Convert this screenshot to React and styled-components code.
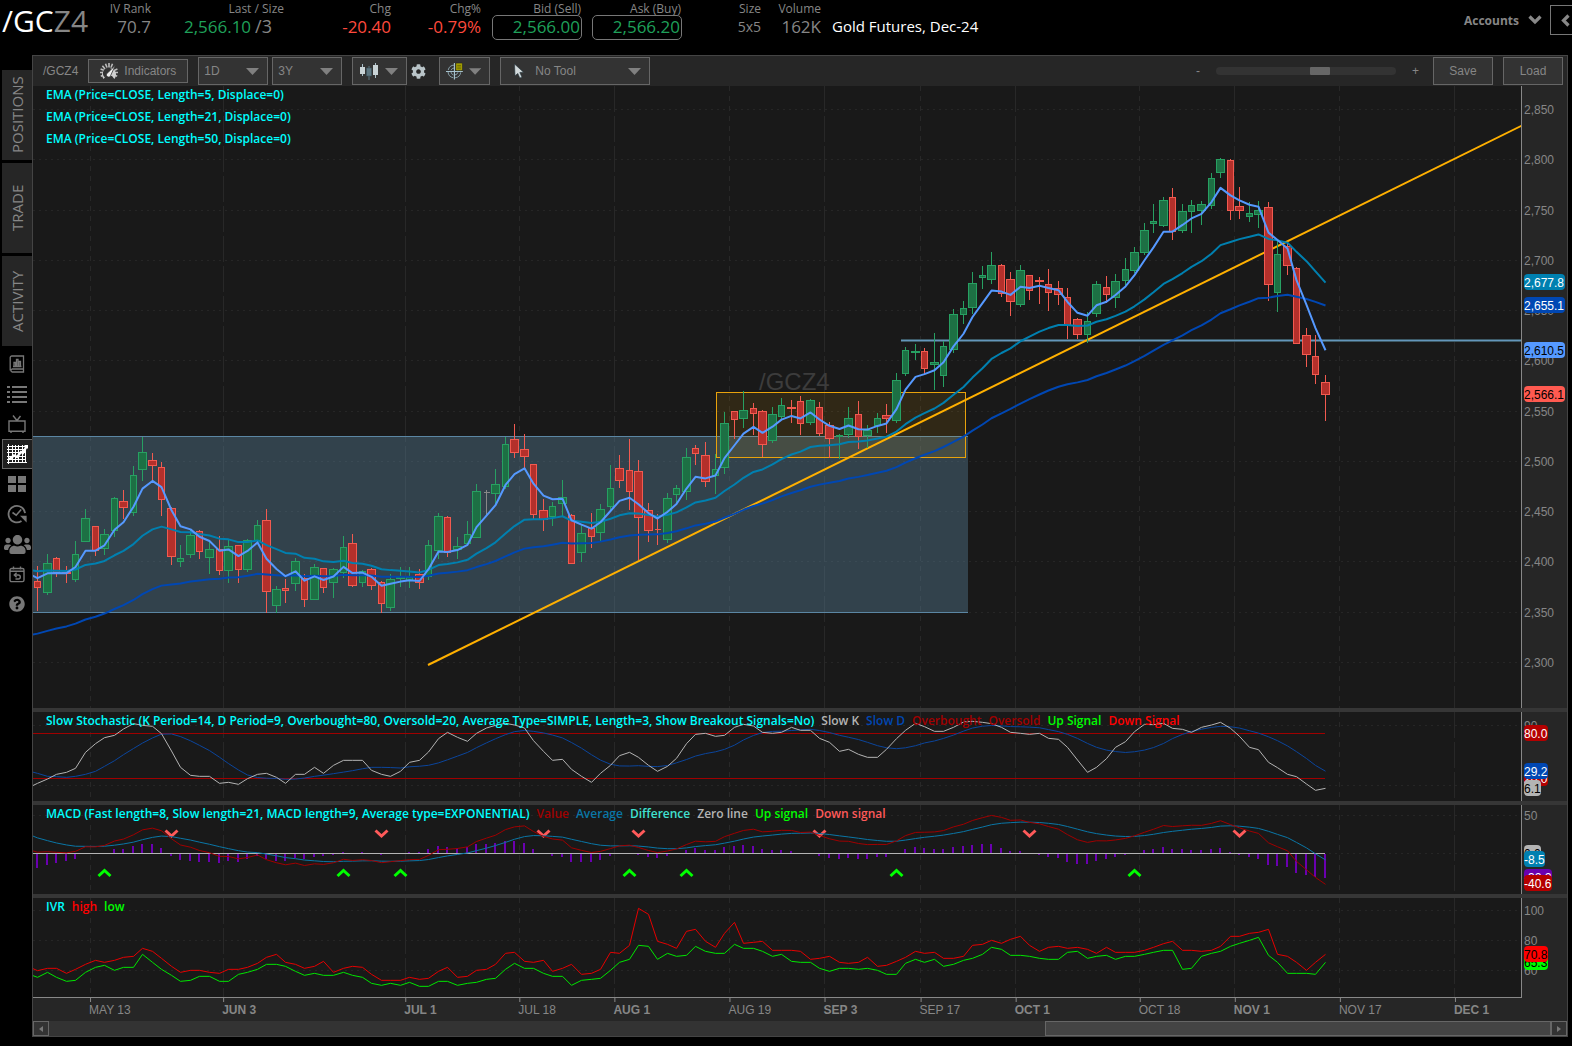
import React from 'react'
import styled, { ThemeProvider, createGlobalStyle } from 'styled-components'
import { FaCog, FaUsers, FaQuestionCircle } from 'react-icons/fa'

const theme = {
  bg: '#000',
  panel: '#262626',
  plot: '#191919',
  control: '#333',
  border: '#666',
  edge: '#444',
  text: '#868686',
  up: '#1fa05a',
  down: '#ff4a3d',
  cyan: '#0ff',
  sans: "'Open Sans', 'Noto Sans', sans-serif",
  ui: "'Liberation Sans', Arial, sans-serif",
}

const GlobalStyle = createGlobalStyle`
  *, *::before, *::after { box-sizing: border-box; }
  html { background: #000; }
  body { margin: 0; }
  button, select, input { font: inherit; color: inherit; margin: 0; }
`

/* ---------- data ---------- */

// colour, high, body top, body bottom, low
const CANDLES = [
  ['r', 566, 581, 587, 610], ['g', 554, 563, 592, 594], ['r', 557, 558, 572, 576], ['r', 566, 572, 573, 582],
  ['g', 541, 554, 579, 581], ['g', 509, 518, 541, 541], ['r', 526, 526, 550, 555], ['g', 529, 534, 548, 554],
  ['g', 497, 498, 530, 536], ['r', 490, 501, 507, 518], ['g', 466, 475, 512, 515], ['g', 437, 452, 469, 480],
  ['r', 453, 460, 465, 482], ['r', 462, 467, 499, 515], ['r', 507, 508, 556, 564], ['g', 545, 558, 561, 566],
  ['g', 530, 535, 554, 557], ['r', 530, 531, 551, 558], ['g', 542, 549, 557, 573], ['r', 536, 549, 570, 574],
  ['g', 540, 546, 570, 582], ['r', 545, 545, 569, 582], ['g', 539, 540, 569, 571], ['g', 520, 525, 540, 541],
  ['r', 509, 520, 591, 612], ['g', 586, 589, 605, 612], ['r', 579, 588, 590, 602], ['g', 558, 561, 583, 590],
  ['r', 574, 578, 599, 606], ['g', 564, 567, 599, 599], ['r', 568, 568, 587, 592], ['g', 568, 569, 582, 597],
  ['g', 536, 547, 572, 577], ['r', 534, 543, 585, 586], ['g', 570, 571, 582, 586], ['r', 568, 569, 585, 589],
  ['r', 581, 582, 603, 612], ['g', 574, 579, 607, 610], ['g', 567, 577, 578, 586], ['g', 567, 577, 580, 587],
  ['r', 569, 574, 582, 588], ['g', 540, 545, 576, 579], ['g', 513, 516, 550, 558], ['r', 516, 517, 552, 556],
  ['g', 537, 546, 549, 558], ['g', 521, 534, 543, 544], ['g', 484, 491, 537, 537], ['n', 490, 492, 492, 515],
  ['g', 469, 484, 493, 504], ['g', 437, 444, 486, 488], ['r', 424, 439, 452, 457], ['r', 434, 449, 456, 468],
  ['r', 464, 464, 514, 518], ['r', 499, 510, 519, 530], ['g', 502, 506, 516, 525], ['g', 480, 497, 503, 516],
  ['r', 514, 515, 563, 563], ['g', 524, 533, 552, 561], ['r', 513, 528, 536, 547], ['g', 504, 509, 532, 541],
  ['g', 465, 488, 506, 510], ['r', 455, 468, 480, 487], ['r', 439, 470, 491, 509], ['r', 460, 471, 517, 559],
  ['r', 503, 510, 530, 541], ['r', 514, 529, 529, 544], ['g', 493, 498, 539, 542], ['g', 485, 488, 494, 504],
  ['g', 448, 457, 491, 499], ['r', 445, 448, 453, 464], ['r', 442, 455, 481, 486], ['g', 454, 469, 475, 493],
  ['g', 412, 423, 467, 473], ['r', 411, 411, 419, 438], ['g', 391, 410, 418, 427], ['r', 403, 408, 413, 434],
  ['r', 410, 411, 444, 456], ['g', 407, 414, 440, 442], ['g', 398, 405, 416, 418], ['r', 400, 407, 408, 422],
  ['r', 396, 401, 423, 434], ['g', 399, 400, 422, 424], ['r', 402, 407, 433, 435], ['r', 422, 425, 438, 457],
  ['g', 434, 435, 436, 458], ['g', 407, 418, 434, 437], ['r', 401, 414, 436, 448], ['g', 425, 430, 435, 447],
  ['g', 413, 418, 425, 432], ['r', 404, 415, 418, 432], ['g', 373, 380, 420, 422], ['g', 347, 350, 373, 375],
  ['g', 344, 351, 352, 359], ['r', 348, 351, 368, 374], ['g', 333, 362, 364, 389], ['g', 341, 346, 375, 386],
  ['g', 309, 314, 349, 352], ['g', 301, 308, 314, 323], ['g', 272, 283, 307, 313], ['g', 266, 275, 277, 288],
  ['g', 252, 265, 279, 283], ['r', 264, 265, 293, 296], ['r', 272, 279, 301, 315], ['g', 265, 270, 304, 306],
  ['r', 275, 275, 290, 299], ['r', 277, 280, 281, 303], ['r', 269, 284, 292, 310], ['r', 281, 288, 294, 304],
  ['r', 288, 297, 325, 338], ['r', 318, 319, 334, 338], ['g', 312, 321, 334, 342], ['g', 281, 284, 313, 316],
  ['r', 276, 287, 294, 302], ['g', 274, 281, 297, 307], ['g', 258, 269, 280, 284], ['g', 247, 252, 270, 272],
  ['g', 223, 230, 252, 254], ['g', 204, 221, 223, 232], ['g', 197, 200, 225, 226], ['r', 188, 197, 231, 239],
  ['g', 204, 211, 230, 232], ['g', 200, 205, 211, 232], ['g', 201, 204, 210, 224], ['g', 173, 178, 205, 208],
  ['g', 158, 159, 172, 177], ['r', 159, 160, 210, 219], ['r', 187, 206, 210, 218], ['g', 202, 213, 216, 221],
  ['g', 201, 210, 214, 227], ['r', 202, 207, 284, 300], ['g', 240, 254, 292, 311], ['r', 242, 246, 265, 274],
  ['r', 267, 268, 343, 343], ['r', 328, 335, 354, 366], ['r', 335, 356, 374, 383], ['r', 375, 382, 394, 420],
]

// lower studies, in thirds of a pixel below y = 700
const SLOW_K = [
  250, 237, 223, 217, 205, 157, 131, 113, 106, 87, 71, 76, 79, 101, 153, 202, 226, 229, 229, 250, 247, 253, 236, 223,
  220, 232, 250, 223, 223, 202, 220, 196, 181, 181, 181, 211, 223, 229, 214, 187, 181, 156, 116, 97, 112, 124, 100, 84,
  76, 70, 75, 84, 122, 154, 181, 178, 208, 229, 247, 220, 196, 167, 157, 172, 196, 214, 199, 175, 131, 103, 100, 109,
  106, 82, 73, 78, 97, 100, 97, 82, 91, 91, 115, 127, 154, 148, 163, 172, 172, 148, 116, 91, 70, 80, 94, 94, 82, 66, 64,
  67, 71, 82, 97, 100, 103, 100, 115, 118, 142, 180, 217, 202, 176, 142, 125, 95, 73, 74, 70, 85, 88, 97, 82, 75, 67,
  85, 109, 142, 149, 187, 203, 223, 230, 252, 271, 265,
]
const SLOW_D_HEAD = [220, 229, 230, 232, 229, 223, 214, 199]

const IVR_HIGH = [
  812, 805, 805, 820, 808, 793, 781, 787, 781, 772, 769, 745, 754, 775, 799, 817, 811, 811, 817, 820, 808, 808, 802,
  790, 772, 763, 787, 793, 805, 799, 784, 817, 805, 799, 802, 823, 841, 841, 841, 832, 838, 835, 814, 802, 832, 829,
  811, 808, 793, 760, 757, 784, 787, 781, 814, 805, 793, 823, 820, 808, 757, 760, 736, 625, 643, 724, 733, 745, 694,
  688, 724, 742, 700, 667, 730, 727, 724, 751, 751, 751, 754, 778, 775, 769, 787, 790, 787, 772, 799, 796, 784, 772,
  754, 760, 757, 775, 775, 769, 736, 733, 721, 730, 718, 709, 736, 754, 742, 739, 745, 742, 748, 760, 742, 757, 757,
  757, 751, 742, 731, 724, 751, 751, 754, 751, 739, 709, 709, 700, 697, 688, 763, 769, 787, 811, 787, 763,
]
const IVR_LOW = [
  832, 817, 832, 844, 841, 817, 802, 796, 811, 802, 802, 763, 787, 808, 826, 844, 841, 829, 829, 844, 844, 823, 817,
  808, 793, 793, 799, 814, 826, 820, 826, 826, 817, 826, 832, 850, 856, 850, 856, 847, 859, 859, 844, 844, 856, 850,
  847, 838, 835, 808, 790, 805, 805, 820, 829, 829, 856, 841, 838, 835, 811, 787, 778, 736, 739, 778, 760, 769, 766,
  739, 754, 760, 760, 733, 745, 745, 754, 769, 763, 784, 787, 787, 805, 814, 805, 805, 808, 805, 811, 823, 823, 790,
  778, 787, 778, 799, 793, 781, 775, 763, 742, 748, 766, 766, 769, 775, 778, 778, 757, 754, 775, 769, 766, 778, 769,
  769, 763, 757, 751, 751, 808, 805, 769, 760, 754, 739, 730, 721, 712, 766, 787, 820, 820, 820, 823, 787,
]

const UP_SIGNALS = [7, 32, 38, 62, 68, 90, 115]
const DOWN_SIGNALS = [14, 36, 53, 63, 82, 104, 126]

const DATES = [
  { x: 90, label: 'MAY 13' },
  { x: 223, label: 'JUN 3', month: true },
  { x: 405, label: 'JUL 1', month: true },
  { x: 519, label: 'JUL 18' },
  { x: 614, label: 'AUG 1', month: true },
  { x: 729, label: 'AUG 19' },
  { x: 824, label: 'SEP 3', month: true },
  { x: 920, label: 'SEP 17' },
  { x: 1015, label: 'OCT 1', month: true },
  { x: 1139, label: 'OCT 18' },
  { x: 1234, label: 'NOV 1', month: true },
  { x: 1339, label: 'NOV 17' },
  { x: 1454, label: 'DEC 1', month: true },
]

const LEFT = 33
const WIDTH = 1488

/* ---------- helpers ---------- */

const barX = i => 37.5 + Math.floor((i * 124) / 13 + 0.8)
const barWidth = i => (((i + 1) % 13) % 2 === 0 ? 9 : 7)
const third = v => 700 + v / 3
const toPath = (values, first = 0) =>
  values.map((y, i) => `${i ? 'L' : 'M'}${barX(i + first)} ${y.toFixed(2)}`).join('')

const ema = (values, length, seed) => {
  const out = [seed]
  values.forEach(v => {
    const prev = out[out.length - 1]
    out.push(prev + ((v - prev) * 2) / (length + 1))
  })
  return out
}

const closes = CANDLES.map(([side, , top, bottom]) => (side === 'g' ? top : bottom) + 0.5)
const ema5 = ema(closes, 5, 573.5)
const ema21 = ema(closes, 21, 569.7)
const ema50 = ema(closes, 50, 635.5)
const ema8 = ema(closes, 8, 564.5)

const ZERO = 853.5
const macd = ema8.map((v, i) => ema21[i] - v)
const macdAverage = ema(macd.slice(1), 9, 25.4)
const macdY = v => ZERO - v * 0.756

const slowD = SLOW_K.map((v, i) =>
  i < 8 ? SLOW_D_HEAD[i] : SLOW_K.slice(i - 8, i + 1).reduce((a, b) => a + b, 0) / 9
)

/* ---------- header ---------- */

const Page = styled.div`
  display: flex;
  flex-direction: column;
  min-height: 100vh;
  padding-bottom: 9px;
  background: ${p => p.theme.bg};
  color: ${p => p.theme.text};
  font-family: ${p => p.theme.sans};
`

const HeaderStyled = styled.header`
  display: grid;
  grid-template-columns: 88px 62px 133px 107px 90px 100px 100px 80px 60px 1fr auto;
  height: 55px;
  padding-left: 2px;
`

const Symbol = styled.h1`
  margin: 0;
  font-size: 30px;
  line-height: 42px;
  font-weight: 400;
  white-space: nowrap;
  color: #fff;

  span { color: ${p => p.theme.text}; }
`

const Quote = styled.div`
  display: flex;
  flex-direction: column;
  align-items: flex-end;
  padding-top: 3px;
  text-align: right;
  white-space: nowrap;
`

const QuoteLabel = styled.span`
  font-size: 12px;
  line-height: 12px;
  padding-right: 1px;
`

const tone = p => (p.$tone ? p.theme[p.$tone] : p.theme.text)

const QuoteValue = styled.span`
  font-size: ${p => (p.$small ? 14 : 17)}px;
  line-height: 24px;
  padding-right: ${p => (p.$inset ? 13 : 1)}px;
  color: ${tone};

  small {
    margin-left: 4px;
    font-size: 18px;
    line-height: 20px;
    color: ${p => p.theme.text};
  }
`

const PriceButton = styled.button`
  width: 90px;
  height: 25px;
  padding: 0 1px 2px;
  border: 1px solid #777;
  border-radius: 5px;
  background: transparent;
  font-size: 17px;
  line-height: 21px;
  text-align: right;
  color: ${p => p.theme.up};
`

const Instrument = styled.p`
  margin: 0;
  padding: 15px 0 0 10px;
  font-size: 15px;
  line-height: 23px;
  white-space: nowrap;
  color: #fff;
`

const AccountArea = styled.div`
  display: flex;
  align-items: flex-start;
  gap: 8px;
  padding-top: 5px;
`

const AccountsButton = styled.button`
  display: flex;
  align-items: center;
  gap: 9px;
  height: 30px;
  padding: 0;
  border: 0;
  background: transparent;
  font-size: 12px;
  font-weight: 700;
`

const CollapseButton = styled.button`
  display: flex;
  align-items: center;
  justify-content: flex-end;
  width: 22px;
  height: 30px;
  padding: 0 2px 0 0;
  border: 1px solid #777;
  border-right: 0;
  background: transparent;
`

function Header() {
  return (
    <HeaderStyled>
      <Symbol>/GC<span>Z4</span></Symbol>
      <Quote>
        <QuoteLabel>IV Rank</QuoteLabel>
        <QuoteValue>70.7</QuoteValue>
      </Quote>
      <Quote>
        <QuoteLabel>Last / Size</QuoteLabel>
        <QuoteValue $tone="up" $inset>2,566.10<small>/3</small></QuoteValue>
      </Quote>
      <Quote>
        <QuoteLabel>Chg</QuoteLabel>
        <QuoteValue $tone="down">-20.40</QuoteValue>
      </Quote>
      <Quote>
        <QuoteLabel>Chg%</QuoteLabel>
        <QuoteValue $tone="down">-0.79%</QuoteValue>
      </Quote>
      <Quote>
        <QuoteLabel>Bid (Sell)</QuoteLabel>
        <PriceButton>2,566.00</PriceButton>
      </Quote>
      <Quote>
        <QuoteLabel>Ask (Buy)</QuoteLabel>
        <PriceButton>2,566.20</PriceButton>
      </Quote>
      <Quote>
        <QuoteLabel>Size</QuoteLabel>
        <QuoteValue $small>5x5</QuoteValue>
      </Quote>
      <Quote>
        <QuoteLabel>Volume</QuoteLabel>
        <QuoteValue>162K</QuoteValue>
      </Quote>
      <Instrument>Gold Futures, Dec-24</Instrument>
      <AccountArea>
        <AccountsButton>
          Accounts
          <svg width="14" height="10" viewBox="0 0 14 10">
            <path d="M1.5 1.5L7 7L12.5 1.5" fill="none" stroke="#888" strokeWidth="3.2" />
          </svg>
        </AccountsButton>
        <CollapseButton aria-label="Collapse">
          <svg width="9" height="13" viewBox="0 0 9 13">
            <path d="M7.5 1.5L2.5 6.5L7.5 11.5" fill="none" stroke="#888" strokeWidth="3.2" />
          </svg>
        </CollapseButton>
      </AccountArea>
    </HeaderStyled>
  )
}

/* ---------- sidebar ---------- */

const Workspace = styled.div`
  display: flex;
  flex: 1;
  padding-right: 4px;
`

const Sidebar = styled.nav`
  display: flex;
  flex-direction: column;
  flex: none;
  width: 32px;
  padding: 15px 0 0 2px;
`

const SideTabs = styled.div`
  display: flex;
  flex-direction: column;
  gap: 3px;
  margin-bottom: 3px;
`

const SideTab = styled.button`
  width: 30px;
  height: 90px;
  padding: 0;
  border: 0;
  background: ${p => p.theme.panel};
  font-size: 15px;
  writing-mode: vertical-rl;

  span {
    display: block;
    line-height: 30px;
    transform: rotate(180deg);
  }
`

const SideIcon = styled.button`
  display: flex;
  align-items: center;
  justify-content: center;
  width: 30px;
  height: 30px;
  padding: 0 1px 0 0;
  border: 1px solid ${p => (p.$active ? '#666' : 'transparent')};
  border-right-width: 0;
  background: ${p => (p.$active ? '#1e1e1e' : 'transparent')};
  color: ${p => (p.$active ? '#fff' : '#777')};

  svg { flex: none; }
`

const Line = props => <g fill="none" stroke="currentColor" {...props} />

const ReportIcon = () => (
  <svg width="16" height="18" viewBox="0 0 16 18">
    <Line strokeWidth="1.3">
      <path d="M3 1H14.5V14H3A1.6 1.6 0 0 0 3 17H14.5V14M1.2 15.5V2.6A1.6 1.6 0 0 1 3 1" />
      <path d="M4 11.5H12.5M5 11V7.5H6.5V11M7.5 11V4.5H9V11M10 11V6.5H11.5V11" />
    </Line>
  </svg>
)

const ListIcon = () => (
  <svg width="20" height="18" viewBox="0 0 20 18">
    <path
      d="M0 1H3V3H0ZM5 1H20V3H5ZM0 6H3V8H0ZM5 6H20V8H5ZM0 11H3V13H0ZM5 11H20V13H5ZM0 16H3V18H0ZM5 16H20V18H5Z"
      fill="currentColor"
    />
  </svg>
)

const TvIcon = () => (
  <svg width="18" height="18" viewBox="0 0 18 18">
    <Line strokeWidth="1.4">
      <path d="M1 6H17V16.2H1ZM3 16V18M15 16V18M5 0.5L9 5.5L12.5 1" />
    </Line>
  </svg>
)

const ChartIcon = () => (
  <svg width="21" height="20" viewBox="0 0 21 20">
    <Line strokeWidth="1">
      <path d="M1.5 0V20M5.5 1V19M8.5 1V19M11.5 1V19M15.5 1V19M18.5 1V19M0 2.5H19M0 5.5H19M0 8.5H19M0 12.5H19M0 15.5H19M0 18.5H20" />
      <path d="M2 15.5L7 11.5L10 13L14 8L16 9L19.5 2.5" strokeWidth="2.4" />
    </Line>
    <path d="M17 1H21V5Z" fill="currentColor" />
  </svg>
)

const TilesIcon = () => (
  <svg width="18" height="18" viewBox="0 0 18 18">
    <path d="M0 1H8V8H0ZM10 1H18V8H10ZM0 10H8V17H0ZM10 10H18V17H10Z" fill="currentColor" />
  </svg>
)

const HistoryIcon = () => (
  <svg width="20" height="20" viewBox="0 0 20 20">
    <Line strokeWidth="1.8">
      <path d="M14.5 17A8.3 8.3 0 1 1 18.1 9.2" />
      <path d="M5.5 8.5L9.2 11.2L14.2 5.5" strokeWidth="1.6" />
    </Line>
    <path d="M13 11.8H19.6V18.6Z" fill="currentColor" />
  </svg>
)

const CalendarIcon = () => (
  <svg width="16" height="17" viewBox="0 0 16 17">
    <Line strokeWidth="1.4">
      <path d="M2.6 2.5H13.4A1.6 1.6 0 0 1 15 4.1V14A1.6 1.6 0 0 1 13.4 15.6H2.6A1.6 1.6 0 0 1 1 14V4.1A1.6 1.6 0 0 1 2.6 2.5ZM1 5.3H15M4.5 0.5V3.5M11.5 0.5V3.5" />
      <path d="M5.5 9H9.3A2 2 0 0 1 9.3 13H6.5M7.6 6.8L5.3 9L7.6 11.2" />
    </Line>
  </svg>
)

const SIDE_ICONS = [
  ['Report', <ReportIcon />],
  ['Watchlist', <ListIcon />],
  ['Video', <TvIcon />],
  ['Chart', <ChartIcon />, true],
  ['Tiles', <TilesIcon />],
  ['History', <HistoryIcon />],
  ['Community', <FaUsers size={27} />],
  ['Calendar', <CalendarIcon />],
  ['Help', <FaQuestionCircle size={16} />],
]

/* ---------- toolbar ---------- */

const Panel = styled.main`
  display: flex;
  flex-direction: column;
  flex: 1;
  min-width: 0;
  border: 1px solid ${p => p.theme.edge};
  background: ${p => p.theme.panel};
`

const Toolbar = styled.div`
  display: flex;
  align-items: center;
  height: 30px;
  padding: 0 4px 0 10px;
  gap: 10px;
  font-family: ${p => p.theme.ui};
  font-size: 12px;
`

const Group = styled.div`
  display: flex;
  align-items: center;
  gap: ${p => p.$gap || 4}px;
`

const ToolButton = styled.button`
  display: flex;
  align-items: center;
  justify-content: ${p => (p.$spread ? 'space-between' : 'center')};
  gap: 6px;
  width: ${p => p.$width}px;
  height: ${p => (p.$low ? 24 : 28)}px;
  padding: 0 8px 0 ${p => (p.$spread ? 6 : 8)}px;
  border: 1px solid ${p => p.theme.border};
  background: ${p => p.theme.control};
`

const IconButton = styled.button`
  display: flex;
  padding: 0;
  border: 0;
  background: transparent;
  color: #b9c4c8;
`

const SelectBox = styled.label`
  display: grid;
  grid-template-columns: auto 1fr 13px;
  align-items: center;
  width: ${p => p.$width}px;
  height: 28px;
  padding-right: 8px;
  border: 1px solid ${p => p.theme.border};
  background: ${p => p.theme.control};

  select {
    grid-area: 1 / 2 / 2 / 4;
    height: 26px;
    padding: 0 20px 0 5px;
    border: 0;
    background: transparent;
    appearance: none;
    outline: none;
  }

  .lead { grid-area: 1 / 1; margin: 0 5px 0 12px; }
  .arrow { grid-area: 1 / 3; pointer-events: none; }
`

const ZoomSlider = styled.input`
  width: 180px;
  height: 8px;
  margin: 0 12px;
  border-radius: 4px;
  background: #333;
  appearance: none;

  &::-webkit-slider-thumb {
    width: 20px;
    height: 8px;
    border-radius: 1px;
    background: #666;
    appearance: none;
  }
`

const SaveLoad = styled.div`
  display: flex;
  gap: 10px;
  margin-left: 4px;
`

const Spacer = styled.div`
  flex: 1;
`

const Arrow = () => (
  <svg className="arrow" width="13" height="7" viewBox="0 0 13 7">
    <path d="M0 0H13L6.5 7Z" fill="#808080" />
  </svg>
)

const GaugeIcon = () => (
  <svg width="18" height="17" viewBox="0 0 18 17">
    <path
      d="M9 0V4M5.5 0.8L7 4.5M2.4 2.8L5 6M0.6 6L4.5 7.5M0 9.5H4M0.8 13.2L4.5 11.5M12.5 0.8L11 4.5M17.4 6L14 7.5M18 9.5H14M17.2 13.2L13.5 11.5"
      stroke="#bdbdbd"
      strokeWidth="1.6"
    />
    <path d="M3.6 16A7 7 0 1 1 14.4 16L12 13H6Z" fill="#cfcfcf" />
    <path d="M5 14.5A5 5 0 0 1 11.5 5.8L8.8 10.8" fill="#333" />
    <path d="M15.4 2.2L10.8 12.2A2.2 2.2 0 1 1 7.8 9.8Z" fill="#eee" stroke="#333" strokeWidth="0.8" />
  </svg>
)

const CandlesIcon = () => (
  <svg width="20" height="18" viewBox="0 0 20 18">
    <path d="M3.5 2V14M16.5 1V16" stroke="#a9bfc8" />
    <path d="M1 5H6V12H1ZM14 3H19V13H14Z" fill="#c9d3d6" />
    <path d="M10 4V18" stroke="#5d7680" />
    <path d="M7.5 6H12.5V14H7.5Z" fill="#5d7680" stroke="#39515b" strokeWidth="0.6" />
  </svg>
)

const TargetIcon = () => (
  <svg width="18" height="18" viewBox="0 0 18 18">
    <g fill="none" stroke="#8aa3ad">
      <circle cx="9" cy="9.5" r="6.8" strokeDasharray="8.7 2" strokeDashoffset="-1" />
      <circle cx="9" cy="9.5" r="3.8" strokeDasharray="4.4 1.6" strokeDashoffset="-1" />
      <path d="M9 0.5V18M0 9.5H18" stroke="#a7c3cf" strokeWidth="1.2" />
    </g>
    <path d="M10.5 0.5H17.5V8.5H10.5Z" fill="#a8a400" stroke="#222" strokeWidth="0.6" />
    <path d="M12 3H16M12 4.8H16M12 6.6H16" stroke="#5b5900" strokeWidth="0.8" />
  </svg>
)

const PointerIcon = () => (
  <svg className="lead" width="12" height="16" viewBox="0 0 12 16">
    <path d="M1.5 1L10.5 9.2L6.8 9.5L9 14.2L6.8 15L4.8 10.4L2 12.8Z" fill="#d3dadc" stroke="#22323a" strokeWidth="0.6" />
  </svg>
)

function ChartToolbar() {
  return (
    <Toolbar>
      <span>/GCZ4</span>
      <ToolButton $width={100} $low><GaugeIcon />Indicators</ToolButton>
      <Group>
        <SelectBox $width={70}>
          <select aria-label="Interval"><option>1D</option></select>
          <Arrow />
        </SelectBox>
        <SelectBox $width={70}>
          <select aria-label="Range"><option>3Y</option></select>
          <Arrow />
        </SelectBox>
      </Group>
      <Group $gap={13}>
        <Group>
          <ToolButton $width={55} $spread aria-label="Chart style"><CandlesIcon /><Arrow /></ToolButton>
          <IconButton aria-label="Settings"><FaCog size={15} /></IconButton>
        </Group>
        <ToolButton $width={51} $spread aria-label="Crosshair"><TargetIcon /><Arrow /></ToolButton>
      </Group>
      <SelectBox $width={150}>
        <PointerIcon />
        <select aria-label="Drawing tool"><option>No Tool</option></select>
        <Arrow />
      </SelectBox>
      <Spacer />
      <Group>
        <span>-</span>
        <ZoomSlider type="range" aria-label="Zoom" defaultValue={59} />
        <span>+</span>
      </Group>
      <SaveLoad>
        <ToolButton $width={60}>Save</ToolButton>
        <ToolButton $width={60}>Load</ToolButton>
      </SaveLoad>
    </Toolbar>
  )
}

/* ---------- chart panes ---------- */

const Pane = styled.section`
  position: relative;
  display: grid;
  grid-template-columns: 1fr 46px;
  grid-template-rows: minmax(0, 1fr);
  flex: ${p => (p.$grow ? '1 0' : '0 0')} ${p => p.$height}px;
  min-height: 0;
  border-bottom: ${p => (p.$last ? 0 : 4)}px solid #363636;
`

const Plot = styled.svg`
  display: block;
  width: 100%;
  height: 100%;
  background: ${p => p.theme.plot};
`

const Scale = styled.svg`
  width: 100%;
  height: 100%;
  border-left: 1px solid #888;
  font-family: ${p => p.theme.ui};
  font-size: 12px;
  fill: ${p => p.theme.text};
`

const Legend = styled.div`
  position: absolute;
  top: 0;
  left: 13px;
  display: flex;
  flex-direction: ${p => (p.$stack ? 'column' : 'row')};
  gap: ${p => (p.$stack ? 4 : 7)}px;
  font-size: 12px;
  font-weight: 600;
  line-height: 18px;
  white-space: nowrap;
`

const LegendItem = styled.span`
  color: ${p => p.$color || p.theme.cyan};
`

const Grid = ({ top, height, rows }) => (
  <g stroke="#262626" shapeRendering="crispEdges">
    {rows.map(y => (
      <path key={y} d={`M${LEFT} ${y + 0.5}H${LEFT + WIDTH}`} strokeDasharray="2 4" />
    ))}
    {DATES.map(d => (
      <path
        key={d.x}
        d={`M${d.x + 0.5} ${top}V${top + height}`}
        strokeDasharray={d.month ? '26 4' : '5 5'}
        stroke="#282828"
      />
    ))}
  </g>
)

function ScaleAxis({ top, height, labels, tags }) {
  const at = y => `${((y - top) / height) * 100}%`
  return (
    <Scale>
      {labels.map(([y, text]) => (
        <svg key={text} y={at(y)} overflow="visible">
          <text x="2" y="5">{text}</text>
        </svg>
      ))}
      {tags.map(([y, text, fill, width, ink]) => (
        <svg key={text} y={at(y)} overflow="visible">
          <rect x="2" y="-8" width={width} height="16" rx="4" fill={fill} />
          <text x="2" y="5" fill={ink || '#fff'}>{text}</text>
        </svg>
      ))}
    </Scale>
  )
}

function ChartPane({ top, height, rows, labels, tags, legend, grow, stack, last, title, children }) {
  return (
    <Pane $height={height + (last ? 0 : 4)} $grow={grow} $last={last}>
      <Plot viewBox={`${LEFT} ${top} ${WIDTH} ${height}`} preserveAspectRatio="none" role="img" aria-label={title}>
        <Grid top={top} height={height} rows={rows} />
        {children}
      </Plot>
      <ScaleAxis top={top} height={height} labels={labels} tags={tags} />
      <Legend $stack={stack}>
        {legend.map(([text, color]) => <LegendItem key={text} $color={color}>{text}</LegendItem>)}
      </Legend>
    </Pane>
  )
}

const CANDLE_COLORS = {
  g: ['#1d7044', '#27a062'],
  r: ['#b4302b', '#f25a50'],
  n: ['#888', '#888'],
}

const Candle = ({ index, data: [side, high, top, bottom, low] }) => {
  const [fill, stroke] = CANDLE_COLORS[side]
  const x = barX(index)
  const w = barWidth(index) - 1
  return (
    <g fill={fill} stroke={stroke}>
      <path d={`M${x} ${high}V${low + 1}`} />
      {bottom > top
        ? <rect x={x - w / 2} y={top + 0.5} width={w} height={bottom - top} />
        : <path d={`M${x - 3} ${top + 0.5}H${x + 3}`} />}
    </g>
  )
}

const PRICE_LABELS = [
  [109, '2,850'], [159, '2,800'], [210, '2,750'], [260, '2,700'], [310, '2,650'], [360, '2,600'],
  [411, '2,550'], [461, '2,500'], [511, '2,450'], [561, '2,400'], [612, '2,350'], [662, '2,300'],
]

function PricePane() {
  return (
    <ChartPane
      grow
      stack
      title="Price"
      top={86}
      height={622}
      rows={PRICE_LABELS.map(l => l[0])}
      labels={PRICE_LABELS}
      tags={[
        [282, '2,677.8', '#0080b0', 41],
        [305, '2,655.1', '#0047b3', 41],
        [350, '2,610.5', '#5599ff', 41, '#000'],
        [394, '2,566.1', '#ff5a50', 41, '#000'],
      ]}
      legend={[
        ['EMA (Price=CLOSE, Length=5, Displace=0)'],
        ['EMA (Price=CLOSE, Length=21, Displace=0)'],
        ['EMA (Price=CLOSE, Length=50, Displace=0)'],
      ]}
    >
      <text x="759" y="390" fontFamily="'Liberation Sans', Arial, sans-serif" fontSize="24" fill="#3c3c3c">/GCZ4</text>
      <g shapeRendering="crispEdges">
        <rect x="33" y="436" width="935" height="176" fill="rgba(95, 138, 165, 0.36)" />
        <path d="M33 436.5H968M33 612.5H968" stroke="#5b86a3" />
        <rect x="716.5" y="392.5" width="249" height="65" fill="rgba(255, 176, 0, 0.1)" stroke="#e8a20c" />
        <path d="M901 340.5H1521" stroke="#3d5a67" strokeWidth="3" />
        <path d="M901 340.5H1521" stroke="#6496bb" />
      </g>
      <path d="M428 665L1522 125.5" stroke="#ffb000" strokeWidth="2" />
      <g shapeRendering="crispEdges">
        {CANDLES.map((c, i) => <Candle key={i} index={i} data={c} />)}
      </g>
      <g fill="none" strokeWidth="2" strokeLinejoin="round">
        <path d={toPath(ema50, -1)} stroke="#0047b3" />
        <path d={toPath(ema21, -1)} stroke="#0080b0" />
        <path d={toPath(ema5, -1)} stroke="#5599ff" />
      </g>
    </ChartPane>
  )
}

function StochasticPane() {
  return (
    <ChartPane
      title="Slow Stochastic"
      top={712}
      height={89}
      rows={[725, 785]}
      labels={[[725, '90']]}
      tags={[
        [733, '80.0', '#b40000', 24],
        [778, '20.0', '#b40000', 24],
        [771, '29.2', '#0047b3', 24],
        [788, '6.1', '#b4b4b4', 17, '#000'],
      ]}
      legend={[
        ['Slow Stochastic (K Period=14, D Period=9, Overbought=80, Oversold=20, Average Type=SIMPLE, Length=3, Show Breakout Signals=No)'],
        ['Slow K', '#b4b4b4'],
        ['Slow D', '#0047b3'],
        ['Overbought', '#a00000'],
        ['Oversold', '#a00000'],
        ['Up Signal', '#0f0'],
        ['Down Signal', '#f00'],
      ]}
    >
      <path d="M33 733.5H1325M33 778.5H1325" stroke="#a00000" />
      <g fill="none">
        <path d={toPath([third(213), ...slowD.map(third)], -1)} stroke="#0b459c" />
        <path d={toPath([third(263), ...SLOW_K.map(third)], -1)} stroke="#b4b4b4" />
      </g>
    </ChartPane>
  )
}

function MacdPane() {
  return (
    <ChartPane
      title="MACD"
      top={805}
      height={89}
      rows={[815, 853]}
      labels={[[815, '50']]}
      tags={[
        [853, '0.0', '#b4b4b4', 17, '#000'],
        [859, '-8.5', '#0080b0', 21],
        [877, '-32.2', '#6a00b0', 28],
        [883, '-40.6', '#b40000', 28],
      ]}
      legend={[
        ['MACD (Fast length=8, Slow length=21, MACD length=9, Average type=EXPONENTIAL)'],
        ['Value', '#a00000'],
        ['Average', '#0a76a6'],
        ['Difference', '#40e0d0'],
        ['Zero line', '#b4b4b4'],
        ['Up signal', '#0f0'],
        ['Down signal', '#ff5a5a'],
      ]}
    >
      <g stroke="#6a00b0" strokeWidth="2" shapeRendering="crispEdges">
        {CANDLES.map((c, i) => (
          <path key={i} d={`M${barX(i) - 0.5} ${ZERO}V${macdY(macd[i + 1] - macdAverage[i + 1]).toFixed(1)}`} />
        ))}
      </g>
      <path d={`M33 ${ZERO}H1325`} stroke="#b4b4b4" />
      <g fill="none" strokeWidth="3">
        {UP_SIGNALS.map(i => (
          <path key={i} d={`M${barX(i) - 6} 876L${barX(i)} 870.5L${barX(i) + 6} 876`} stroke="#0f0" />
        ))}
        {DOWN_SIGNALS.map(i => (
          <path key={i} d={`M${barX(i) - 6} 830.5L${barX(i)} 836L${barX(i) + 6} 830.5`} stroke="#ff5a5a" />
        ))}
      </g>
      <g fill="none">
        <path d={toPath(macdAverage.map(macdY), -1)} stroke="#0a76a6" />
        <path d={toPath(macd.map(macdY), -1)} stroke="#a00000" />
      </g>
    </ChartPane>
  )
}

function IvrPane() {
  return (
    <ChartPane
      last
      title="IVR"
      top={898}
      height={99}
      rows={[910, 940, 970]}
      labels={[[910, '100'], [940, '80'], [970, '60']]}
      tags={[
        [962, '65.3', '#0f0', 24, '#000'],
        [954, '70.8', '#f00', 24, '#000'],
      ]}
      legend={[['IVR'], ['high', '#f00'], ['low', '#0f0']]}
    >
      <g fill="none">
        <path d={toPath([third(800), ...IVR_HIGH.map(third)], -1)} stroke="#e60000" />
        <path d={toPath([third(822), ...IVR_LOW.map(third)], -1)} stroke="#00e600" />
      </g>
    </ChartPane>
  )
}

const DateAxis = styled.svg`
  display: block;
  flex: none;
  width: calc(100% - 45px);
  height: 24px;
  border-top: 1px solid #888;
  overflow: visible;
  font-family: ${p => p.theme.ui};
  font-size: 12px;
  fill: ${p => p.theme.text};
`

const ScrollBar = styled.div`
  display: flex;
  flex: none;
  height: 15px;
  background: #333;
`

const ScrollButton = styled.button`
  display: flex;
  align-items: center;
  justify-content: center;
  flex: none;
  width: 16px;
  padding: 0;
  border: 1px solid ${p => p.theme.border};
  background: ${p => p.theme.control};
`

const ScrollTrack = styled.div`
  display: flex;
  justify-content: flex-end;
  flex: 1;
`

const ScrollThumb = styled.div`
  width: 33.7%;
  border: 1px solid ${p => p.theme.border};
  background: #444;
`

export default function App() {
  return (
    <ThemeProvider theme={theme}>
      <GlobalStyle />
      <Page>
        <Header />
        <Workspace>
          <Sidebar>
            <SideTabs>
              {['POSITIONS', 'TRADE', 'ACTIVITY'].map(t => <SideTab key={t}><span>{t}</span></SideTab>)}
            </SideTabs>
            {SIDE_ICONS.map(([label, icon, active]) => (
              <SideIcon key={label} aria-label={label} $active={active}>{icon}</SideIcon>
            ))}
          </Sidebar>
          <Panel>
            <ChartToolbar />
            <PricePane />
            <StochasticPane />
            <MacdPane />
            <IvrPane />
            <DateAxis>
              {DATES.map(d => (
                <svg key={d.label} x={`${((d.x - LEFT) / WIDTH) * 100}%`} overflow="visible">
                  <path d="M0.5 0V4" stroke="#888" />
                  <text x="-1" y="16" fontWeight={d.month ? 700 : 400}>{d.label}</text>
                </svg>
              ))}
            </DateAxis>
            <ScrollBar>
              <ScrollButton aria-label="Scroll left">
                <svg width="4" height="6"><path d="M4 0V6L0 3Z" fill="#777" /></svg>
              </ScrollButton>
              <ScrollTrack><ScrollThumb /></ScrollTrack>
              <ScrollButton aria-label="Scroll right">
                <svg width="4" height="6"><path d="M0 0V6L4 3Z" fill="#777" /></svg>
              </ScrollButton>
            </ScrollBar>
          </Panel>
        </Workspace>
      </Page>
    </ThemeProvider>
  )
}
